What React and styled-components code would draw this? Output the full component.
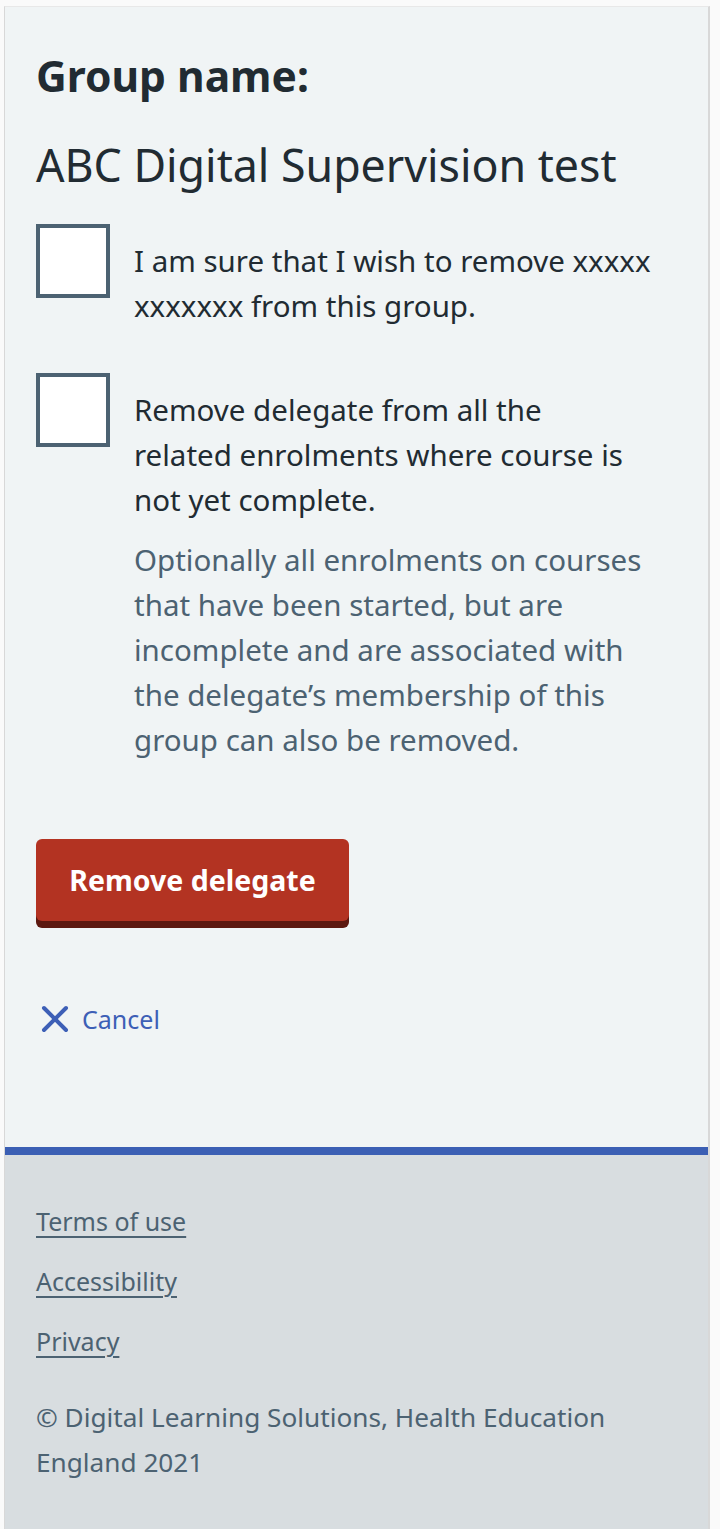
import styled, { createGlobalStyle } from 'styled-components';

const GlobalStyle = createGlobalStyle`
  html, body {
    margin: 0;
    padding: 0;
    background: #fafafa;
  }
  body {
    font-family: 'Noto Sans', 'Open Sans', sans-serif;
    color: #212b32;
  }
`;

const Frame = styled.div`
  margin: 6px 10px 0 4px;
  border-top: 1px solid #e8e8e8;
  border-left: 1px solid #d8d8d8;
  border-right: 2px solid #d8d8d8;
  display: flex;
  flex-direction: column;
  min-height: 1522px;
`;

const Main = styled.main`
  background: #f0f4f5;
  padding: 39px 31px 0 31px;
  height: 1101px;
`;

const Label = styled.h2`
  margin: 0;
  font-size: 42.5px;
  line-height: 60px;
  font-weight: 700;
`;

const GroupName = styled.p`
  margin: 29px 0 0;
  font-size: 44.7px;
  line-height: 60px;
  font-weight: 400;
`;

const CheckList = styled.div`
  display: flex;
  flex-direction: column;
  gap: 45px;
  margin-top: 29px;
`;

const CheckRow = styled.label`
  display: grid;
  grid-template-columns: 74px 1fr;
  column-gap: 24px;
  align-items: start;
`;

const Box = styled.span`
  box-sizing: border-box;
  width: 74px;
  height: 74px;
  border: 4px solid #4c6272;
  background: #fff;
`;

const CheckText = styled.div`
  padding-top: 14px;
  font-size: 29.5px;
  line-height: 45px;
`;

const Hint = styled.div`
  grid-column: 2;
  margin-top: 15px;
  max-width: 520px;
  font-size: 29.5px;
  line-height: 45px;
  color: #4c6272;
`;

const DangerButton = styled.button`
  margin-top: 77px;
  display: block;
  width: 313px;
  height: 82px;
  padding: 0;
  border: 0;
  border-radius: 6px;
  background: #b33322;
  box-shadow: 0 7px 0 #5c1810;
  color: #fff;
  font-family: inherit;
  font-size: 28.5px;
  font-weight: 700;
  cursor: pointer;
`;

const CancelLink = styled.a`
  margin-top: 81px;
  display: inline-flex;
  align-items: center;
  gap: 13px;
  padding-left: 5px;
  color: #3d5fb6;
  font-size: 25px;
  text-decoration: none;
`;

const Footer = styled.footer`
  flex: 1;
  background: #d8dde0;
  border-top: 8px solid #3b5fb4;
  padding: 47px 31px 40px;
`;

const FooterLinks = styled.ul`
  list-style: none;
  margin: 0;
  padding: 0;
  display: flex;
  flex-direction: column;
  gap: 22px;
`;

const FooterLink = styled.a`
  font-size: 25px;
  line-height: 38px;
  color: #4c6272;
  text-decoration: underline;
  text-underline-offset: 5px;
  text-decoration-thickness: 2px;
`;

const Copyright = styled.p`
  margin: 35px 0 0;
  font-size: 26.2px;
  line-height: 45px;
  color: #4c6272;
`;

function CrossIcon() {
  return (
    <svg width="28" height="28" viewBox="0 0 28 28" aria-hidden="true">
      <path
        d="M3 3 L25 25 M25 3 L3 25"
        stroke="currentColor"
        strokeWidth="4"
        strokeLinecap="round"
        fill="none"
      />
    </svg>
  );
}

const footerLinks = ['Terms of use', 'Accessibility', 'Privacy'];

export default function App() {
  return (
    <>
      <GlobalStyle />
      <Frame>
        <Main>
          <Label>Group name:</Label>
          <GroupName>ABC Digital Supervision test</GroupName>
          <CheckList>
            <CheckRow>
              <Box />
              <CheckText>
                I am sure that I wish to remove xxxxx xxxxxxx from this group.
              </CheckText>
            </CheckRow>
            <CheckRow>
              <Box />
              <CheckText>
                Remove delegate from all the
                <br />
                related enrolments where course is
                <br />
                not yet complete.
              </CheckText>
              <Hint>
                Optionally all enrolments on courses that have been started, but
                are incomplete and are associated with the delegate’s
                membership of this group can also be removed.
              </Hint>
            </CheckRow>
          </CheckList>
          <DangerButton>Remove delegate</DangerButton>
          <CancelLink href="#">
            <CrossIcon />
            Cancel
          </CancelLink>
        </Main>
        <Footer>
          <FooterLinks>
            {footerLinks.map((link) => (
              <li key={link}>
                <FooterLink href="#">{link}</FooterLink>
              </li>
            ))}
          </FooterLinks>
          <Copyright>
            © Digital Learning Solutions, Health Education England 2021
          </Copyright>
        </Footer>
      </Frame>
    </>
  );
}
